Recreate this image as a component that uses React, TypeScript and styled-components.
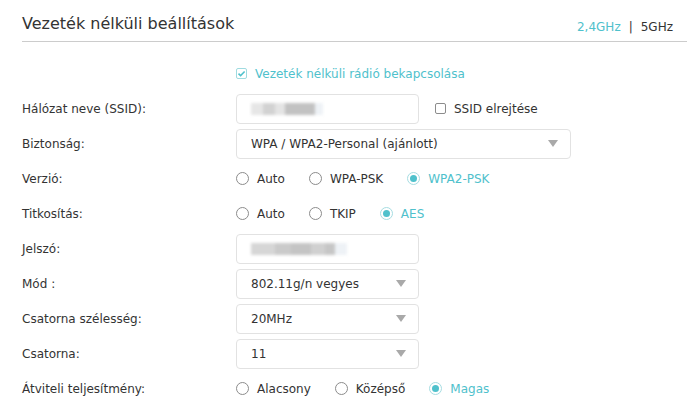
import { FunctionComponent } from "react"
import styled, { createGlobalStyle } from "styled-components"

const TEAL = "#4fc1cc"

const GlobalStyle = createGlobalStyle`
  body {
    margin: 0;
    background: #ffffff;
    font-family: "DejaVu Sans", Verdana, sans-serif;
    color: #333333;
  }
`

const StyledPage = styled.div`
  width: 693px;
  height: 420px;
  box-sizing: border-box;
  padding: 0 6px 0 22px;
  overflow: hidden;
`

const StyledHeader = styled.div`
  height: 42px;
  display: flex;
  align-items: flex-start;
  justify-content: space-between;
  border-bottom: 1px solid #cccccc;
  box-sizing: border-box;
  padding: 0 14px 0 0;
`

const StyledTitle = styled.h2`
  margin: 0;
  font-size: 16px;
  font-weight: normal;
  color: #333333;
  padding-top: 14px;
`

const StyledBands = styled.div`
  font-size: 12px;
  display: flex;
  gap: 8px;
  color: #333333;
  padding-top: 20px;

  span.active {
    color: ${TEAL};
  }
`

const StyledForm = styled.div`
  display: flex;
  flex-direction: column;
  padding-top: 14px;
`

const StyledRow = styled.div`
  display: flex;
  align-items: center;
  height: 35px;
`

const StyledLabel = styled.div`
  width: 214px;
  flex-shrink: 0;
  font-size: 12px;
  color: #333333;
`

const StyledField = styled.div`
  display: flex;
  align-items: center;
  gap: 16px;
`

const StyledBox = styled.div<{ $wide?: boolean }>`
  width: ${(p) => (p.$wide ? "335px" : "183px")};
  height: 30px;
  box-sizing: border-box;
  border: 1px solid #e2e2e2;
  border-radius: 4px;
  display: flex;
  align-items: center;
  justify-content: space-between;
  padding: 0 12px 0 14px;
  font-size: 12px;
  color: #333333;
  background: #ffffff;
`

const StyledArrow = styled.span`
  width: 0;
  height: 0;
  border-left: 5px solid transparent;
  border-right: 5px solid transparent;
  border-top: 7px solid #a9a9a9;
`

const StyledBlur = styled.div`
  display: flex;
  filter: blur(1.5px);
`

const StyledBlurBit = styled.span<{ $w: number; $tone: string }>`
  display: block;
  width: ${(p) => p.$w}px;
  height: 12px;
  background: ${(p) => p.$tone};
`

const StyledCheck = styled.label<{ $active?: boolean }>`
  display: flex;
  align-items: center;
  gap: 8px;
  font-size: 12px;
  color: ${(p) => (p.$active ? TEAL : "#333333")};
`

const StyledCheckBox = styled.span<{ $checked?: boolean }>`
  width: 11px;
  height: 11px;
  box-sizing: border-box;
  border: 1px solid ${(p) => (p.$checked ? "#9fdbe0" : "#8c8c8c")};
  border-radius: 2px;
  display: flex;
  align-items: center;
  justify-content: center;
`

const StyledRadios = styled.div`
  display: flex;
  align-items: center;
  gap: 24px;
`

const StyledRadio = styled.label<{ $checked?: boolean }>`
  display: flex;
  align-items: center;
  gap: 8px;
  font-size: 12px;
  color: ${(p) => (p.$checked ? TEAL : "#333333")};
`

const StyledCircle = styled.span<{ $checked?: boolean }>`
  width: 13px;
  height: 13px;
  box-sizing: border-box;
  border-radius: 50%;
  border: 1px solid ${(p) => (p.$checked ? "#a6dde2" : "#8c8c8c")};
  display: flex;
  align-items: center;
  justify-content: center;

  &::after {
    content: "";
    width: 7px;
    height: 7px;
    border-radius: 50%;
    background: ${(p) => (p.$checked ? TEAL : "transparent")};
  }
`

const CheckMark = () => (
  <svg width="9" height="9" viewBox="0 0 9 9">
    <path d="M1.5 4.6 L3.6 6.6 L7.6 2.4" fill="none" stroke={TEAL} strokeWidth="1.5" />
  </svg>
)

interface InterfaceRadioGroup {
  options: string[]
  selected: number
}

const RadioGroup: FunctionComponent<InterfaceRadioGroup> = ({ options, selected }) => (
  <StyledRadios>
    {options.map((o, i) => (
      <StyledRadio key={o} $checked={i === selected}>
        <StyledCircle $checked={i === selected} />
        {o}
      </StyledRadio>
    ))}
  </StyledRadios>
)

const Select: FunctionComponent<{ value: string; wide?: boolean }> = ({ value, wide }) => (
  <StyledBox $wide={wide}>
    {value}
    <StyledArrow />
  </StyledBox>
)

const App = () => {
  return (
    <>
      <GlobalStyle />
      <StyledPage>
        <StyledHeader>
          <StyledTitle>Vezeték nélküli beállítások</StyledTitle>
          <StyledBands>
            <span className="active">2,4GHz</span>
            <span>|</span>
            <span>5GHz</span>
          </StyledBands>
        </StyledHeader>
        <StyledForm>
          <StyledRow>
            <StyledLabel />
            <StyledCheck $active>
              <StyledCheckBox $checked>
                <CheckMark />
              </StyledCheckBox>
              Vezeték nélküli rádió bekapcsolása
            </StyledCheck>
          </StyledRow>
          <StyledRow>
            <StyledLabel>Hálózat neve (SSID):</StyledLabel>
            <StyledField>
              <StyledBox>
                <StyledBlur>
                  <StyledBlurBit $w={12} $tone="#e6e6e6" />
                  <StyledBlurBit $w={12} $tone="#d2d2d2" />
                  <StyledBlurBit $w={10} $tone="#e4e4e4" />
                  <StyledBlurBit $w={30} $tone="#c2c2c2" />
                  <StyledBlurBit $w={8} $tone="#eef2f6" />
                </StyledBlur>
              </StyledBox>
              <StyledCheck>
                <StyledCheckBox />
                SSID elrejtése
              </StyledCheck>
            </StyledField>
          </StyledRow>
          <StyledRow>
            <StyledLabel>Biztonság:</StyledLabel>
            <Select value="WPA / WPA2-Personal (ajánlott)" wide />
          </StyledRow>
          <StyledRow>
            <StyledLabel>Verzió:</StyledLabel>
            <RadioGroup options={["Auto", "WPA-PSK", "WPA2-PSK"]} selected={2} />
          </StyledRow>
          <StyledRow>
            <StyledLabel>Titkosítás:</StyledLabel>
            <RadioGroup options={["Auto", "TKIP", "AES"]} selected={2} />
          </StyledRow>
          <StyledRow>
            <StyledLabel>Jelszó:</StyledLabel>
            <StyledBox>
              <StyledBlur>
                <StyledBlurBit $w={24} $tone="#d6d6d6" />
                <StyledBlurBit $w={16} $tone="#cacaca" />
                <StyledBlurBit $w={20} $tone="#c4c4c4" />
                <StyledBlurBit $w={14} $tone="#d0d0d0" />
                <StyledBlurBit $w={10} $tone="#c6c6c6" />
                <StyledBlurBit $w={12} $tone="#eef2f6" />
              </StyledBlur>
            </StyledBox>
          </StyledRow>
          <StyledRow>
            <StyledLabel>Mód :</StyledLabel>
            <Select value="802.11g/n vegyes" />
          </StyledRow>
          <StyledRow>
            <StyledLabel>Csatorna szélesség:</StyledLabel>
            <Select value="20MHz" />
          </StyledRow>
          <StyledRow>
            <StyledLabel>Csatorna:</StyledLabel>
            <Select value="11" />
          </StyledRow>
          <StyledRow>
            <StyledLabel>Átviteli teljesítmény:</StyledLabel>
            <RadioGroup options={["Alacsony", "Középső", "Magas"]} selected={2} />
          </StyledRow>
        </StyledForm>
      </StyledPage>
    </>
  )
}

export default App
